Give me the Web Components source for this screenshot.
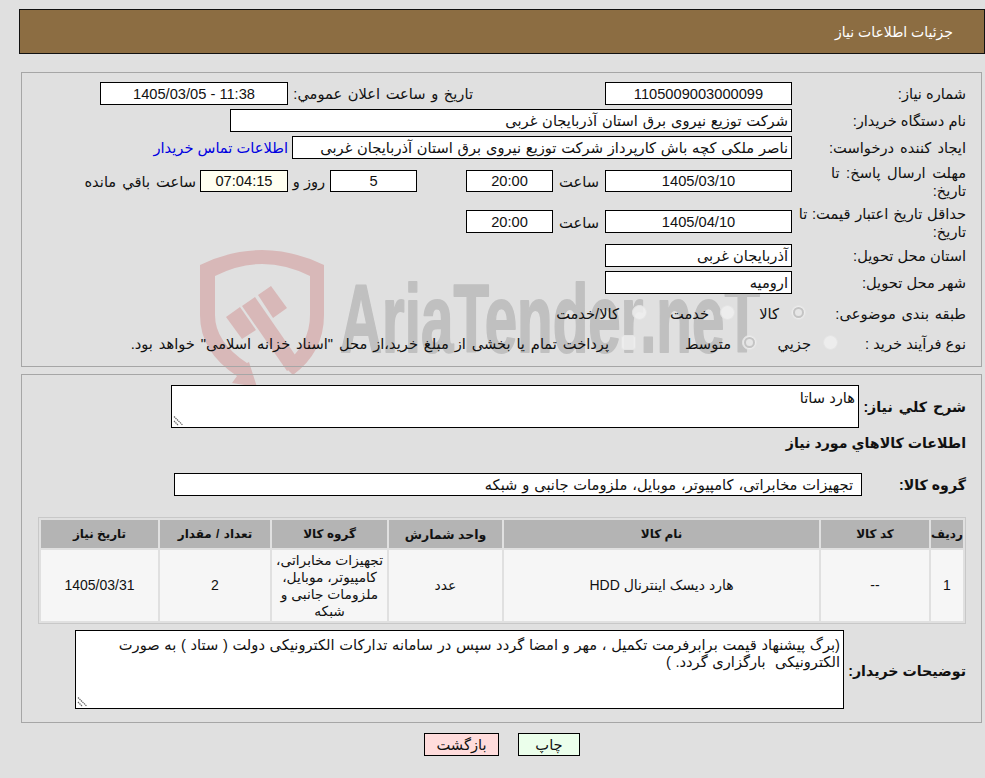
<!DOCTYPE html>
<html lang="fa"><head><meta charset="utf-8"><title>جزئیات اطلاعات نیاز</title>
<style>
html{margin:0;padding:0;background:#e0e0e0}
body{margin:0;padding:0;font:14.67px "Liberation Sans","DejaVu Sans",sans-serif;color:#111;height:778px;overflow:hidden}
</style></head><body>
<need-page></need-page>
<script>
const base=`:host{box-sizing:border-box}*{box-sizing:border-box}`;
function def(name,css,html){
  class C extends HTMLElement{
    constructor(){super();const r=this.attachShadow({mode:'open'});
      r.innerHTML=`<style>${base}${css}</style>${html}`;}
  }
  customElements.define(name,C);
}
def('need-title',`:host{display:flex;align-items:center;height:45px;background:#8c6d42;border:1px solid #111;color:#fff;padding:0 31px;font-size:14px}`,`<slot></slot>`);
def('need-panel',`:host{display:block;border:1px solid #a6a6a6;margin:0 3px 0 2px}`,`<slot></slot>`);
def('need-box',`:host{display:flex;flex:none;align-items:center;background:#fff;border:1px solid #000;height:23px;padding:0 3px;white-space:nowrap;overflow:hidden}
:host([center]){justify-content:center}:host([cream]){background:#fffff0}`,`<slot></slot>`);
def('need-area',`:host{display:block;flex:none;position:relative;background:#fff;border:1px solid #000;padding:4px 3px;line-height:17px;white-space:pre-wrap}
svg{position:absolute;left:1px;bottom:1px;width:10px;height:10px}`,`<slot></slot><svg viewBox="0 0 10 10"><path d="M1 .5 9.500 9M1 5 5.500 9.500" stroke="#666" stroke-width="1.2" stroke-dasharray="1.4 .7" fill="none"/></svg>`);
def('need-radio',`:host{display:block;flex:none;width:15px;height:15px;border-radius:50%;background:rgba(238,238,238,.85);border:1px solid #e4e4e4;position:relative}
:host([on])::after{content:"";position:absolute;inset:1px;border-radius:50%;border:2px solid #c4c4c4;background:#e6e6e6}
:host([sq]){border-radius:3px}`,``);
def('need-btn',`:host{display:flex;align-items:center;justify-content:center;height:23px;border:1px solid #000;background:#ebffeb}
:host([red]){background:#ffdcdc}`,`<slot></slot>`);
def('need-watermark',`:host{position:absolute;left:199px;top:250px;width:562px;height:138px;display:block;pointer-events:none;z-index:-1}
svg{display:block;width:100%;height:100%;overflow:visible}
text{font-family:"Liberation Sans",sans-serif;font-weight:700;fill:#c0c0c0;stroke:#c0c0c0;stroke-width:2px;stroke-linejoin:round}`,
`<svg viewBox="199 250 562 138">
<g fill="#d8b8b8">
<path fill-rule="evenodd" d="M200 265Q262 235 324 265V315Q324 352 293 375L283 365Q310 345 310 315V276Q262 252 215 276V315Q215 342 247 363L249 362 257 387 232 383 237 376Q200 352 200 315Z"/>
<path d="M226 317 240 307 256 330 242 339Z"/>
<path d="M242 306 255 297 300 362 287 371Z"/>
<path d="M258 295 271 286 287 308 273 318Z"/>
</g>
<text direction="ltr" x="340" y="352" font-size="97" textLength="420" lengthAdjust="spacingAndGlyphs">AriaTender.neT</text>
</svg>`);
def('need-page',`:host{display:block;position:relative;height:778px;direction:rtl;padding:9px 0 0 19px}
a{color:#0000e0;text-decoration:none}
.lab{display:block;flex:none;line-height:18px}
.rt{padding-top:3px}
.bold{font-weight:700;font-size:14.2px}
.c{text-align:center}
.top{margin-top:18px;height:295px;padding:9px 15px 0 0}
.row{display:flex;align-items:center}
.r{height:23px;margin-top:4px}
.w{width:174px}
.two{height:36px;margin-top:5px}
.sec{margin-top:7px;height:349px;padding:10px 15px 0 16px}
table{box-sizing:border-box;border-collapse:separate;border-spacing:2px;border:1px solid #c8c8c8;width:928px;table-layout:fixed;margin:21px 0 0}
th{background:#b4b4b4;height:28px;padding:0;font-size:12px}
td{background:#f6f6f6;text-align:center;padding:0;line-height:17px;height:71px;font-size:14px}
td.g{font-size:13.8px}
.btns{display:flex;justify-content:center;gap:19px;margin-top:10px}
`,`
<need-watermark></need-watermark>
<need-title>جزئیات اطلاعات نیاز</need-title>
<need-panel class="top">
  <div class="row r" style="margin-top:0"><span class="lab w">شماره نیاز:</span><need-box center style="width:187px">1105009003000099</need-box><span class="lab" style="width:317px;padding-right:132px;word-spacing:1.5px">تاریخ و ساعت اعلان عمومي:</span><need-box center style="width:188px;direction:ltr">1405/03/05 - 11:38</need-box></div>
  <div class="row r"><span class="lab w">نام دستگاه خریدار:</span><need-box style="width:562px;word-spacing:.7px">شرکت توزیع نیروی برق استان آذربایجان غربی</need-box></div>
  <div class="row r"><span class="lab w" style="word-spacing:2px">ایجاد کننده درخواست:</span><need-box style="width:500px;word-spacing:.7px">ناصر ملکی کچه باش کارپرداز شرکت توزیع نیروی برق استان آذربایجان غربی</need-box><a class="lab" href="#" style="margin-right:4px">اطلاعات تماس خریدار</a></div>
  <div class="row two"><span class="lab w" style="word-spacing:2.500px">مهلت ارسال پاسخ: تا<br>تاریخ:</span><need-box center style="width:187px;height:22px;margin-bottom:2px">1405/03/10</need-box><span class="lab c" style="width:52px">ساعت</span><need-box center style="width:87px;height:22px;margin-bottom:2px">20:00</need-box><span style="width:49px;flex:none"></span><need-box center style="width:87px;height:22px;margin-bottom:2px">5</need-box><span class="lab c" style="width:42px">روز و</span><need-box center cream style="width:88px;height:22px;margin-bottom:2px">07:04:15</need-box><span class="lab" style="margin-right:4px;word-spacing:2px">ساعت باقي مانده</span></div>
  <div class="row two"><span class="lab w" style="word-spacing:.7px">حداقل تاریخ اعتبار قیمت: تا<br>تاریخ:</span><need-box center style="width:187px;margin-bottom:3px">1405/04/10</need-box><span class="lab c" style="width:52px">ساعت</span><need-box center style="width:87px;margin-bottom:3px">20:00</need-box></div>
  <div class="row r" style="margin-top:3px"><span class="lab w">استان محل تحویل:</span><need-box style="width:187px">آذربایجان غربی</need-box></div>
  <div class="row r"><span class="lab w">شهر محل تحویل:</span><need-box style="width:187px">ارومیه</need-box></div>
  <div class="row" style="margin-top:8px;height:20px"><span class="lab rt" style="width:160px;word-spacing:1.500px">طبقه بندی موضوعی:</span><need-radio on></need-radio><span class="lab rt" style="width:56px;padding-right:12px">کالا</span><need-radio></need-radio><span class="lab rt" style="width:73px;padding-right:11px">خدمت</span><need-radio></need-radio><span class="lab rt" style="padding-right:13px">کالا/خدمت</span></div>
  <div class="row" style="margin-top:10px;height:20px"><span class="lab rt" style="width:128px">نوع فرآیند خرید :</span><need-radio></need-radio><span class="lab rt" style="width:66px;padding-right:12px">جزیي</span><need-radio on></need-radio><span class="lab rt" style="width:106px;padding-right:11px">متوسط</span><need-radio sq></need-radio><span class="lab rt" style="padding-right:12px;word-spacing:1.800px">پرداخت تمام یا بخشی از مبلغ خرید،از محل "اسناد خزانه اسلامی" خواهد بود.</span></div>
</need-panel>
<need-panel class="sec">
  <div class="row"><span class="lab bold" style="width:107px;word-spacing:2px">شرح کلي نیاز:</span><need-area style="width:688px;height:43px">هارد ساتا</need-area></div>
  <div class="lab bold" style="margin-top:6px">اطلاعات کالاهاي مورد نیاز</div>
  <div class="row" style="margin-top:21px"><span class="lab bold" style="width:104px">گروه کالا:</span><need-box style="width:688px;padding-right:8px;word-spacing:.8px">تجهیزات مخابراتی، کامپیوتر، موبایل، ملزومات جانبی و شبکه</need-box></div>
  <table><colgroup><col style="width:32px"><col style="width:108px"><col style="width:315px"><col style="width:113px"><col style="width:115px"><col style="width:110px"><col style="width:117px"></colgroup>
  <tr><th>ردیف</th><th>کد کالا</th><th>نام کالا</th><th style="font-size:12.500px">واحد شمارش</th><th>گروه کالا</th><th style="word-spacing:1px">تعداد / مقدار</th><th>تاریخ نیاز</th></tr>
  <tr><td>1</td><td>--</td><td>هارد دیسک اینترنال HDD</td><td>عدد</td><td class="g">تجهیزات مخابراتی، کامپیوتر، موبایل، ملزومات جانبی و شبکه</td><td>2</td><td>1405/03/31</td></tr></table>
  <div class="row" style="margin-top:6px"><span class="lab bold" style="width:122px;padding-top:3px">توضیحات خریدار:</span><need-area style="width:769px;height:79px;padding-top:6px;word-spacing:.6px">(برگ پیشنهاد قیمت برابرفرمت تکمیل ، مهر و امضا گردد سپس در سامانه تدارکات الکترونیکی دولت ( ستاد ) به صورت الکترونیکی  بارگزاری گردد. )</need-area></div>
</need-panel>
<div class="btns"><need-btn style="width:62px">چاپ</need-btn><need-btn red style="width:75px">بازگشت</need-btn></div>
`);
</script>
</body></html>
